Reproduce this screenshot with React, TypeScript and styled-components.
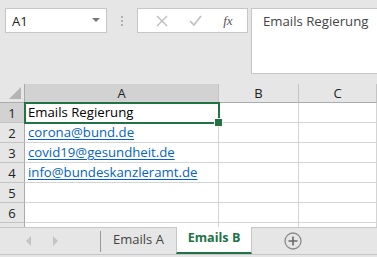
import React from 'react';
import styled, { createGlobalStyle } from 'styled-components';

const GlobalStyle = createGlobalStyle`
  html, body {
    margin: 0;
    padding: 0;
    background: #e6e6e6;
  }
  * {
    box-sizing: border-box;
  }
`;

const Window = styled.div`
  width: 377px;
  height: 257px;
  overflow: hidden;
  background: #e6e6e6;
  font-family: 'Open Sans', 'Noto Sans', sans-serif;
  display: flex;
  flex-direction: column;
`;

// Obere Leiste mit Namenfeld und Bearbeitungsleiste
const TopBar = styled.div`
  height: 84px;
  flex: none;
  display: flex;
  align-items: flex-start;
  padding: 8px 0 0 5px;
`;

const NameBox = styled.div`
  width: 102px;
  height: 25px;
  background: #fff;
  border: 1px solid #c6c6c6;
  display: flex;
  align-items: center;
  justify-content: space-between;
  padding: 0 6px 0 6px;
  font-size: 13px;
  color: #222;
`;

const DropArrow = styled.span`
  width: 0;
  height: 0;
  border-left: 4px solid transparent;
  border-right: 4px solid transparent;
  border-top: 4px solid #777;
  margin-top: -2px;
`;

const Grip = styled.div`
  width: 30px;
  height: 25px;
  display: flex;
  flex-direction: column;
  align-items: center;
  justify-content: center;
  gap: 2px;
`;

const Dot = styled.span`
  width: 2px;
  height: 2px;
  background: #b0b0b0;
`;

const FormulaButtons = styled.div`
  width: 111px;
  height: 25px;
  background: #fff;
  border: 1px solid #c6c6c6;
  display: flex;
  align-items: center;
  justify-content: space-around;
  padding: 0 4px 0 8px;
`;

const Fx = styled.span`
  font-family: 'Liberation Serif', 'DejaVu Serif', serif;
  font-style: italic;
  font-size: 13px;
  color: #555;
`;

const FormulaInput = styled.div`
  margin-left: 3px;
  flex: 1;
  height: 66px;
  background: #fff;
  border: 1px solid #c6c6c6;
  border-right: none;
  padding: 3px 0 0 11px;
  font-size: 13.2px;
  color: #444;
`;

// Tabellenraster
const Sheet = styled.div`
  height: 143px;
  flex: none;
  display: grid;
  grid-template-columns: 25px 194px 80px 1fr;
  grid-auto-rows: 20px;
  grid-template-rows: 19px;
  background: #fff;
  overflow: hidden;
  position: relative;
`;

const Corner = styled.div`
  background: #e6e6e6;
  border-right: 1px solid #ababab;
  border-bottom: 1px solid #ababab;
  position: relative;
  &::after {
    content: '';
    position: absolute;
    right: 3px;
    bottom: 3px;
    width: 0;
    height: 0;
    border-left: 12px solid transparent;
    border-bottom: 12px solid #b4b4b4;
  }
`;

const ColHead = styled.div<{ $active?: boolean }>`
  background: ${({ $active }) => ($active ? '#d2d2d2' : '#e6e6e6')};
  border-right: 1px solid #c4c4c4;
  border-bottom: 1px solid #ababab;
  display: flex;
  align-items: center;
  justify-content: center;
  font-size: 13px;
  color: #222;
`;

const RowHead = styled.div<{ $active?: boolean }>`
  background: ${({ $active }) => ($active ? '#d2d2d2' : '#e6e6e6')};
  border-right: 1px solid #ababab;
  border-bottom: 1px solid #c4c4c4;
  display: flex;
  align-items: center;
  justify-content: center;
  font-size: 13px;
  color: #222;
`;

const Cell = styled.div`
  border-right: 1px solid #d4d4d4;
  border-bottom: 1px solid #d4d4d4;
  padding: 0 0 0 3px;
  font-size: 13.2px;
  line-height: 19px;
  color: #000;
  white-space: nowrap;
  overflow: visible;
  position: relative;
`;

const Link = styled.span`
  color: #0563c1;
  text-decoration: underline;
  text-underline-offset: 2px;
`;

const Selection = styled.div`
  position: absolute;
  left: 24px;
  top: 18px;
  width: 196px;
  height: 22px;
  border: 2px solid #217346;
  pointer-events: none;
  &::after {
    content: '';
    position: absolute;
    right: -5px;
    bottom: -5px;
    width: 7px;
    height: 7px;
    background: #217346;
    border: 1px solid #fff;
  }
`;

// Blattregister
const TabBar = styled.div`
  flex: 1;
  display: flex;
  align-items: stretch;
  border-top: 1px solid #c6c6c6;
  position: relative;
  &::after {
    content: '';
    position: absolute;
    left: 0;
    right: 0;
    bottom: 2px;
    height: 1px;
    background: #c6c6c6;
  }
`;

const NavArrows = styled.div`
  width: 100px;
  display: flex;
  align-items: center;
  padding-left: 26px;
  gap: 22px;
  padding-bottom: 4px;
`;

const Arrow = styled.span<{ $dir: 'left' | 'right' }>`
  width: 0;
  height: 0;
  border-top: 5px solid transparent;
  border-bottom: 5px solid transparent;
  ${({ $dir }) =>
    $dir === 'left' ? 'border-right: 5px solid #c4c4c4;' : 'border-left: 5px solid #c4c4c4;'}
`;

const Divider = styled.div`
  width: 1px;
  margin: 3px 0 5px;
  background: #9a9a9a;
`;

const Tab = styled.div<{ $active?: boolean }>`
  width: ${({ $active }) => ($active ? '76px' : '75px')};
  display: flex;
  align-items: center;
  justify-content: center;
  padding-bottom: 4px;
  font-size: ${({ $active }) => ($active ? '12.6px' : '13px')};
  position: relative;
  z-index: 1;
  color: ${({ $active }) => ($active ? '#217346' : '#444')};
  font-weight: ${({ $active }) => ($active ? 700 : 400)};
  background: ${({ $active }) => ($active ? '#fff' : 'transparent')};
  border-left: ${({ $active }) => ($active ? '1px solid #c6c6c6' : 'none')};
  border-right: ${({ $active }) => ($active ? '1px solid #c6c6c6' : 'none')};
  margin-top: ${({ $active }) => ($active ? '-1px' : '0')};
  margin-bottom: 3px;
  border-bottom: ${({ $active }) => ($active ? '2px solid #217346' : 'none')};
`;

const AddButton = styled.div`
  margin-left: 32px;
  display: flex;
  align-items: center;
  padding-bottom: 4px;
`;

const cols = ['A', 'B', 'C'];

const rows: React.ReactNode[] = [
  'Emails Regierung',
  <Link>corona@bund.de</Link>,
  <Link>covid19@gesundheit.de</Link>,
  <Link>info@bundeskanzleramt.de</Link>,
  '',
  '',
  '',
];

export default function App() {
  return (
    <>
      <GlobalStyle />
      <Window>
        <TopBar>
          <NameBox>
            A1
            <DropArrow />
          </NameBox>
          <Grip>
            <Dot />
            <Dot />
            <Dot />
          </Grip>
          <FormulaButtons>
            <svg width="12" height="12" viewBox="0 0 12 12">
              <path d="M1 1 L11 11 M11 1 L1 11" stroke="#bdbdbd" strokeWidth="1.4" fill="none" />
            </svg>
            <svg width="13" height="11" viewBox="0 0 13 11">
              <path d="M1 6 L5 10 L12 1" stroke="#bdbdbd" strokeWidth="1.6" fill="none" />
            </svg>
            <Fx>fx</Fx>
          </FormulaButtons>
          <FormulaInput>Emails Regierung</FormulaInput>
        </TopBar>

        <Sheet>
          <Corner />
          {cols.map((c) => (
            <ColHead key={c} $active={c === 'A'}>
              {c}
            </ColHead>
          ))}
          {rows.map((content, i) => (
            <React.Fragment key={i}>
              <RowHead $active={i === 0}>{i < 6 ? i + 1 : ''}</RowHead>
              <Cell>{content}</Cell>
              <Cell />
              <Cell />
            </React.Fragment>
          ))}
          <Selection />
        </Sheet>

        <TabBar>
          <NavArrows>
            <Arrow $dir="left" />
            <Arrow $dir="right" />
          </NavArrows>
          <Divider />
          <Tab>Emails A</Tab>
          <Tab $active>Emails B</Tab>
          <AddButton>
            <svg width="18" height="18" viewBox="0 0 18 18">
              <circle cx="9" cy="9" r="8" stroke="#8a8a8a" strokeWidth="1.3" fill="none" />
              <path d="M9 4.5 V13.5 M4.5 9 H13.5" stroke="#6a6a6a" strokeWidth="1.6" />
            </svg>
          </AddButton>
        </TabBar>
      </Window>
    </>
  );
}
